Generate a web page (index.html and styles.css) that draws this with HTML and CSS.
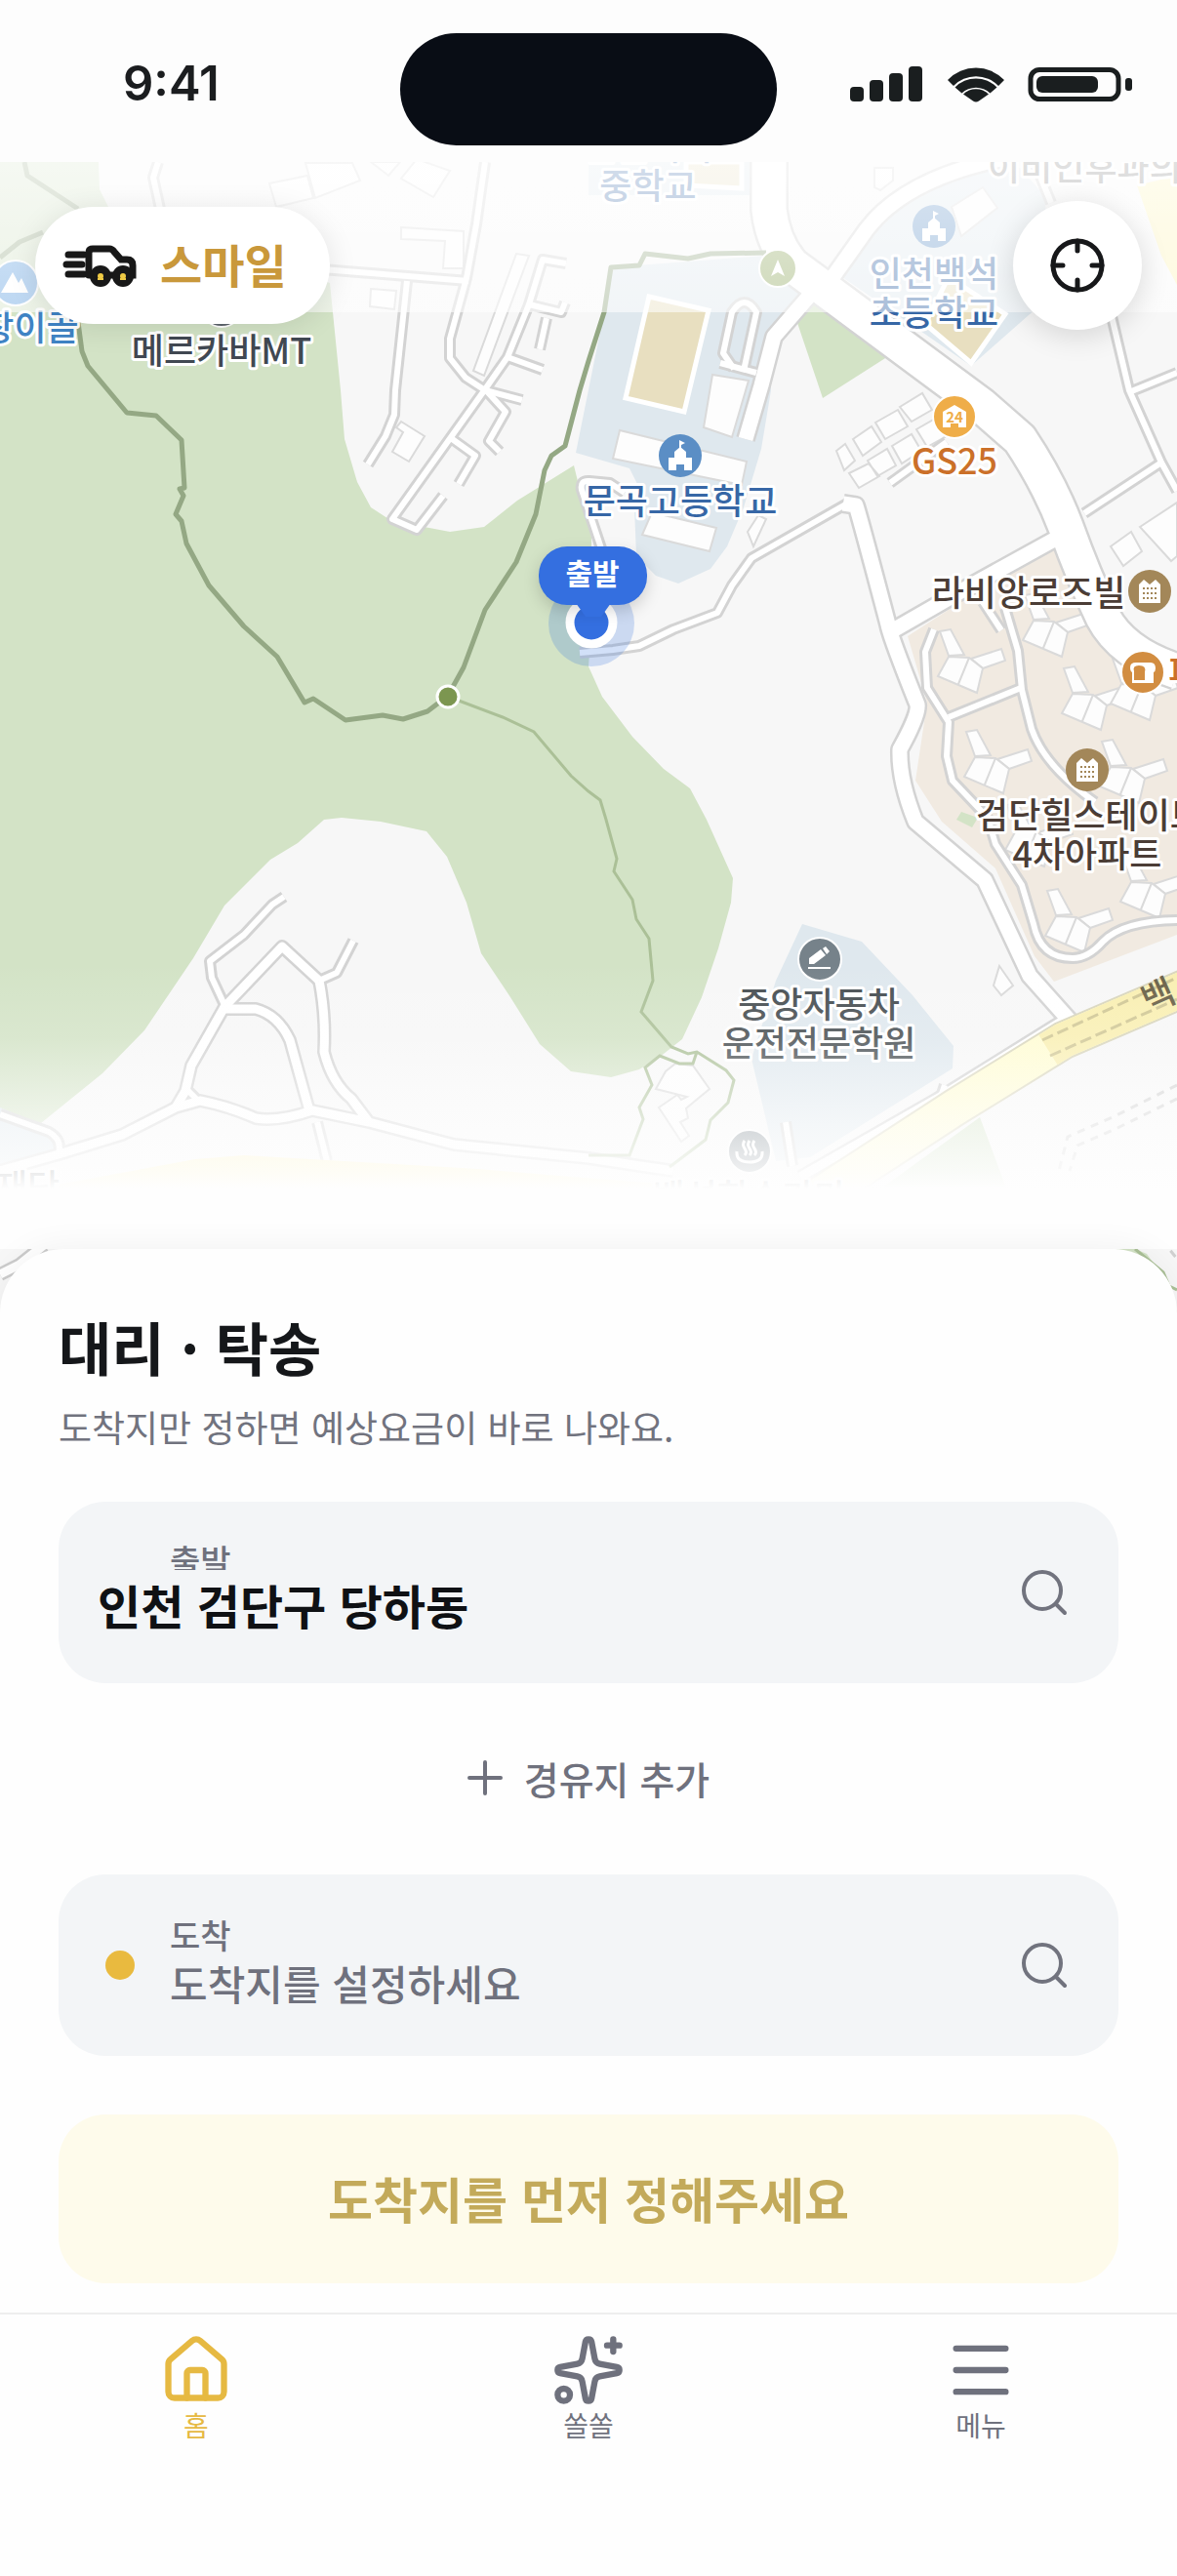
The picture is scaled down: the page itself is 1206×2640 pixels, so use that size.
FILE: index.html
```html
<!DOCTYPE html>
<html lang="ko">
<head>
  <meta charset="UTF-8">
  <meta name="viewport" content="width=device-width, initial-scale=1.0">
  <title>스마일</title>
  <link rel="stylesheet" href="styles.css">
</head>
<body>
  <header class="status-bar">
    <span class="time">9:41</span>
    <span class="island"></span>
    <svg class="status-icons" viewBox="0 0 292 40" aria-hidden="true">
      <rect x="1" y="23" width="14" height="15" rx="4"/>
      <rect x="21" y="16" width="14" height="22" rx="4"/>
      <rect x="41" y="9" width="14" height="29" rx="4"/>
      <rect x="61" y="2" width="14" height="36" rx="4"/>
      <path d="M101 16a40 40 0 0 1 58 0l-6 6a32 32 0 0 0-46 0z"/>
      <path d="M108.500 23.500a30 30 0 0 1 43 0l-7 6a21 21 0 0 0-29 0z"/>
      <path d="M117 30.500a19 19 0 0 1 26 0l-10 7q-3 2-6 0z"/>
      <rect class="battery" x="186" y="5.500" width="90" height="30" rx="9"/>
      <rect x="192" y="12" width="63" height="17" rx="6"/>
      <rect x="283" y="14" width="7" height="13" rx="3"/>
    </svg>
  </header>

  <main class="screen">
    <section class="map">
      <svg class="map-canvas" viewBox="0 166 1206 1180" role="img" aria-label="지도">
        <defs>
          <g id="lanes">
            <path d="M162 166L157 182L164 214"/>
            <path d="M497 166L488 230L478 285L461 347V367L477 387L497 400L535 410"/>
            <path d="M330 276L480 288"/>
            <path d="M417 288L405 400L404 425L395 447L377 476"/>
            <path d="M580 270L556 266L542 312L520 366L497 399L402 532L427 543L454 508"/>
            <path d="M542 312L575 320L579 310M560 326L553 358M520 366L556 379"/>
            <path d="M497 399L518 422L501 452L512 463M462 449L487 467L470 496"/>
            <path d="M752 378L741 362L750 320Q763 300 775 320L762 380"/>
            <path d="M738 372L775 382"/>
            <path d="M1060 166L1077 208M1138 320L1157 400L1190 474L1206 503M1157 402L1206 382"/>
            <path d="M1190 474L1111 526"/>
            <path d="M616 562L596 502Q594 492 604 493L625 495L640 505"/>
            <path d="M868 516L770 572L750 600L735 628L690 645L655 662L628 666L594 669"/>
            <path d="M291 919L279 927L250 958L215 985L217 1002L230 1030"/>
            <path d="M362 964L345 997L327 1005"/>
            <path d="M325 1150L335 1190"/>
            <path d="M190 1115L205 1130"/>
            <path d="M0 1142L50 1160Q64 1168 60 1182"/>
            <path d="M957 645L948 668L950 705L972 740L970 775L976 800L1012 838L1020 865L1047 907L1059 947Q1066 982 1099 982Q1115 982 1130 965Q1150 944 1206 943"/>
            <path d="M1030 623L1043 667L1047 707L1057 747Q1070 785 1122 822"/>
            <path d="M972 735L1046 705M1007 617L1026 646"/>
            <path d="M912 495L970 453"/>
            <path d="M805 1150L812 1195M968 1112L962 1130"/>
          </g>
          <g id="streets">
            <path d="M864 516L877 518Q881 530 910 640Q912 652 940 722Q942 732 922 768Q921 800 938 842L1009 902L1055 1000L1096 1046"/>
            <path d="M1100 542L995 600L915 646"/>
            <path d="M832 300L793 345L780 395L764 450"/>
            <path d="M849 290L888 235Q930 180 1040 160"/>
          </g>
          <g id="farm">
            <path d="M327 1005L289 970L230 1032L196 1092L190 1118L180 1135"/>
            <path d="M230 1034H262Q285 1040 297 1066L318 1142"/>
            <path d="M327 1005Q334 1040 332 1078Q340 1110 360 1126L378 1150"/>
            <path d="M0 1200L60 1183L125 1163L180 1135L205 1128Q235 1134 262 1146Q285 1150 320 1138L378 1150L465 1173L603 1187L690 1200"/>
            <path d="M1095 1042L960 1126L820 1206"/>
          </g>
          <g id="avenue">
            <path d="M788 160V215Q792 250 812 272L850 300L1005 415L1045 450Q1075 495 1092 540Q1110 590 1130 632Q1150 670 1206 688"/>
          </g>
          <g id="tower">
            <path d="M-30-27L-19-29L-5-3L-21-2Z"/>
            <path d="M2 1L33-9L37 3L14 11Z"/>
            <path d="M-21-1L0 0L14 11L8 36L-32 19ZM0 0L-11 27"/>
          </g>
          <g id="school">
            <circle r="22"/>
            <path class="glyph" d="M-12 15V2H-6V-4L0-9L6-4V2H12V15H4V9H-4V15ZM-1-8V-16L5-13L1-11V-8Z"/>
          </g>
          <g id="apartment">
            <circle r="22"/>
            <path class="glyph" d="M-11 12V-7L-6-12L0-7L6-12L11-7V12Z"/>
            <path class="windows" d="M-7-3H8M-7 2H8M-7 7H8"/>
          </g>
        </defs>

        <rect class="ground" y="166" width="1206" height="1180"/>

        <!-- parks and woods -->
        <path class="wood" d="M0 166H101L102 194L112 214L338 290L349 400L353 450L366 494L380 520L403 535L440 541L461 545L496 540L530 513L588 477L606 550L606 640L603 683L617 714L648 755L680 788L707 808L724 840L751 900L749 925L736 972L719 1022L699 1065L680 1080L655 1096L626 1104L585 1098L553 1070L523 1022L493 977L478 925L458 878L437 852L390 842L350 838L332 840L305 864L277 881L230 928L198 982L148 1056L105 1100L42 1151L0 1140Z"/>
        <path class="wood" d="M815 325L838 303L915 362L843 408ZM1004 1145L1032 1220H900Z"/>
        <path class="wood" d="M1140 1270L1175 1285L1200 1320L1206 1346H1170Z"/>

        <!-- school grounds and blocks -->
        <path class="campus" d="M626 274L785 262L822 300L785 345L790 400L780 460L762 520L745 560L728 583L695 598L672 590L652 570L650 520L655 500L645 480L590 464L619 320ZM860 282L900 225L965 180L1045 172L1070 200L1080 300L995 375L930 330ZM603 166H768V200H603Z"/>
        <path class="campus" d="M822 947L883 965L935 1020L977 1072L976 1095L830 1186L795 1190L770 1085L795 1005ZM0 1135L55 1158L62 1178L0 1196Z"/>
        <path class="estate" d="M1085 552L1095 556L1125 650L1160 692L1206 705V958L1080 1006L1060 980L1020 890L965 842L938 800L950 720L930 652Z"/>
        <path class="wood" d="M985 832L1002 838L996 848L980 840Z"/>
        <path class="field" d="M665 304L726 318L701 422L641 408ZM703 166H760V193L703 190ZM948 332L995 372L1030 322L972 284Z"/>
        <path class="house" d="M730 384L767 390L750 448L721 438ZM635 441L765 473L760 497L628 470ZM668 525L734 541L727 565L658 548ZM766 545L777 528L785 532L772 560Z"/>
        <path class="house" d="M975 212L1007 192L1022 213L985 242Z"/>

        <!-- loose buildings -->
        <path class="house" d="M276 188L315 180L321 203L283 212ZM313 167H361L369 185L323 203ZM427 163L461 175L444 202L411 183ZM380 166L398 180L410 166ZM411 233L475 237V275H454L456 247L411 245ZM380 296L406 298L404 317L379 314ZM529 260L542 262L496 385L485 380ZM411 432L435 447L419 473L402 463L413 443L406 438Z"/>
        <path class="house" d="M922 417L945 403L955 420L934 432ZM897 433L920 420L930 437L907 450ZM874 450L893 437L903 453L884 467ZM857 462L866 455L876 472L865 482ZM870 485L890 475L901 488L880 500ZM889 472L909 460L918 477L899 488ZM914 457L934 445L944 462L924 475ZM939 440L960 428L968 448L950 458Z"/>
        <path class="house" d="M1138 560L1159 545L1170 565L1151 580ZM1168 540L1206 515V570L1200 575ZM896 172H915V185L902 195L896 192ZM1024 990L1038 1010L1026 1020L1018 1010ZM672 1116L682 1098L692 1090L710 1092L727 1116L703 1136L705 1146L697 1150L706 1164L698 1170L675 1135L694 1122L698 1127L704 1124Z"/>
        <use href="#tower" class="house" x="1080" y="637"/>
        <use href="#tower" class="house" x="993" y="674"/>
        <use href="#tower" class="house" x="1120" y="712"/>
        <use href="#tower" class="house" x="1170" y="702"/>
        <use href="#tower" class="house" x="1020" y="777"/>
        <use href="#tower" class="house" x="1159" y="787"/>
        <use href="#tower" class="house" x="1062" y="852"/>
        <use href="#tower" class="house" x="1103" y="940"/>
        <use href="#tower" class="house" x="1180" y="905"/>

        <!-- roads: grey casing first, white on top -->
        <g class="casing">
          <use href="#lanes" stroke-width="12"/>
          <use href="#streets" stroke-width="20"/>
          <use href="#farm" stroke-width="14"/>
          <use href="#avenue" stroke-width="40"/>
        </g>
        <g class="surface">
          <use href="#lanes" stroke-width="6"/>
          <use href="#streets" stroke-width="15"/>
          <use href="#farm" stroke-width="9"/>
          <use href="#avenue" stroke-width="35"/>
        </g>
        <path class="highway-edge" d="M1230 1006L1090 1066L980 1134L840 1225"/>
        <path class="highway" d="M1230 1006L1090 1066L980 1134L840 1225"/>
        <path class="highway tint" d="M1230 1006L1090 1066L1074 1076"/>
        <path class="lane-mark" d="M1068 1066L1206 1002M1076 1082L1206 1024"/>
        <path class="highway-fill" d="M60 1214L200 1188L250 1184L490 1198L560 1204L700 1215V1240H60ZM1165 190L1206 180V292L1190 262Z"/>
        <path class="dashed" d="M1206 1112L1140 1145L1094 1165L1085 1200M1206 1126L1145 1156L1104 1174L1096 1200M1190 1270L1206 1290"/>
        <path class="casing-line" d="M0 1306L20 1296L45 1276"/>
        <path class="surface-line" d="M0 1306L20 1296L45 1276"/>

        <!-- walking trails -->
        <path class="trail" d="M25 166L28 180L80 214M0 264L20 248L44 238M80 330L84 360L90 375L130 423L160 426L186 451L189 500L184 501L188 508L180 527L186 534L191 557L214 600L250 642L284 673L312 720L321 716L354 738L392 733L413 737L438 729L459 713L475 684L497 625L529 576L549 527L558 482L565 467L579 457L594 400L603 370L619 320L626 274L655 272L661 260L705 265L728 260L785 259"/>
        <path class="footpath" d="M470 718L515 735L547 750L585 795L603 811L615 820L621 840L632 880L629 893L648 922L652 942L665 962L669 1005L657 1037L688 1073L705 1080L714 1078L744 1097L752 1107L746 1130L728 1148L723 1168L686 1196M714 1078L710 1090H696L676 1082L661 1094L668 1112L655 1135L659 1147L645 1184L603 1184M1163 1280L1192 1304L1198 1318L1206 1322"/>
        <circle class="trail-dot" cx="459" cy="714" r="11"/>

        <!-- places -->
        <g class="poi">
          <g transform="translate(16 290)" fill="#5f9fe0"><circle r="23"/><path class="glyph" d="M-15 10L-3-11L3 0L6-5L13 10Z"/></g>
          <g transform="translate(227 314)" fill="#5d646c"><circle r="21"/></g>
          <use href="#school" x="957" y="232" fill="#5b8ec5"/>
          <use href="#school" x="697" y="467" fill="#5b8ec5"/>
          <g transform="translate(797 275)" fill="#8da65c"><circle r="19"/><path class="glyph" d="M0-9L7 8L0 4L-7 8Z"/></g>
          <g transform="translate(978 427)" fill="#efad48"><circle r="22"/><path class="glyph" d="M-12 11V-5L0-12L12-5V11H4V7H-4V11Z"/></g>
          <use href="#apartment" x="1178" y="606" fill="#a38759"/>
          <use href="#apartment" x="1114" y="789" fill="#a38759"/>
          <g transform="translate(1171 689)" fill="#d28d41"><circle r="22"/><path class="glyph" d="M-13-5Q-13-10-7-10H8Q13-10 13-4Q13-1 11 0V11H-11V0Q-13-1-13-5Z"/><path d="M-9 8V-1Q-11-7-4-7Q4-7 2 0V8Z"/></g>
          <g transform="translate(840 983)" fill="#76828a"><circle r="22"/><path class="glyph" d="M-12 8V10H11V8ZM-11 5V-1L1-10L6-4L-6 5ZM3-11L6-13L10-8L7-5Z"/></g>
          <g transform="translate(768 1180)" fill="#76828a"><circle r="22"/><path class="steam" d="M-13 0Q-14 11 0 11Q14 11 13 0M-5-11Q-8-7-5-3T-5 4M0-11Q-3-7 0-3T0 4M5-11Q2-7 5-3T5 4"/></g>
        </g>

        <g class="place-names">
          <text class="badge-text" x="978" y="433">24</text>
          <text class="blue" x="664" y="164">인천백석</text>
          <text class="blue" x="664" y="204">중학교</text>
          <text class="blue" x="957" y="294">인천백석</text>
          <text class="blue" x="957" y="334">초등학교</text>
          <text class="blue" x="697" y="527">문곡고등학교</text>
          <text class="sky" x="31" y="349">창이골</text>
          <text x="227" y="373">메르카바MT</text>
          <text class="grey" x="1128" y="185">이비인후과의원</text>
          <text class="orange" x="978" y="486">GS25</text>
          <text class="brown" x="1054" y="621">라비앙로즈빌</text>
          <text class="orange" x="1280" y="702">파리바게뜨</text>
          <text class="brown" x="1116" y="849">검단힐스테이트</text>
          <text class="brown" x="1114" y="889">4차아파트</text>
          <text class="slate" x="839" y="1043">중앙자동차</text>
          <text class="slate" x="839" y="1083">운전전문학원</text>
          <text class="slate" x="768" y="1240">백석한수가마</text>
          <text class="slate" x="28" y="1230">재단</text>
          <text class="road-name" x="1192" y="1032" transform="rotate(-24 1192 1032)">백</text>
        </g>
      </svg>
      <div class="veil-top"></div>
      <div class="veil-bottom"></div>

      <svg class="map-canvas pin" viewBox="0 166 1206 1180" aria-hidden="true">
        <circle class="pin-halo" cx="606" cy="639" r="44"/>
        <circle class="pin-dot" cx="606" cy="638" r="22"/>
        <rect class="pin-label" x="552" y="560" width="111" height="60" rx="29"/>
        <path class="pin-tail" d="M590 618H626L616 632H600Z"/>
        <text class="pin-text" x="607" y="599">출발</text>
      </svg>

      <div class="map-controls">
        <a class="brand" href="#">
          <svg class="brand-icon" viewBox="0 0 76 44" aria-hidden="true">
            <path class="speed" d="M6 11H22M4 21H20M6 31H22"/>
            <path class="car" d="M27 31V9Q27 5 31 5H48Q51 5 53 8L60 16H66Q72 16 72 22V32H27"/>
            <circle cx="39" cy="33" r="11"/>
            <circle cx="62" cy="33" r="11"/>
            <path class="hub" d="M36 35H42V37H36ZM59 35H65V37H59Z"/>
            <circle class="hub" cx="39" cy="33" r="3"/>
            <circle class="hub" cx="62" cy="33" r="3"/>
          </svg>
          <span>스마일</span>
        </a>
        <button class="locate" type="button" aria-label="현재 위치">
          <svg viewBox="0 0 60 60" aria-hidden="true">
            <circle cx="30" cy="30" r="25"/>
            <path d="M30 5V15M30 45V55M5 30H15M45 30H55"/>
          </svg>
        </button>
      </div>
    </section>

    <section class="sheet">
      <h1>대리 · 탁송</h1>
      <p class="lead">도착지만 정하면 예상요금이 바로 나와요.</p>

      <button class="place start" type="button">
        <span class="place-text">
          <span class="place-label">출발</span>
          <strong class="place-value">인천 검단구 당하동</strong>
        </span>
        <svg class="search" viewBox="0 0 50 50" aria-hidden="true"><circle cx="22" cy="23" r="19"/><path d="M36 37L45 46"/></svg>
      </button>

      <button class="add-stop" type="button">
        <svg viewBox="0 0 36 36" aria-hidden="true"><path d="M18 2V34M2 18H34"/></svg>
        경유지 추가
      </button>

      <button class="place goal" type="button">
        <span class="dot"></span>
        <span class="place-text">
          <span class="place-label">도착</span>
          <span class="place-value">도착지를 설정하세요</span>
        </span>
        <svg class="search" viewBox="0 0 50 50" aria-hidden="true"><circle cx="22" cy="23" r="19"/><path d="M36 37L45 46"/></svg>
      </button>

      <button class="submit" type="button" disabled>도착지를 먼저 정해주세요</button>
    </section>
  </main>

  <nav class="tab-bar">
    <a class="tab active" href="#">
      <svg viewBox="0 0 24 24" aria-hidden="true">
        <path d="M15 21v-8a1 1 0 0 0-1-1h-4a1 1 0 0 0-1 1v8"/>
        <path d="M3 10a2 2 0 0 1 .709-1.528l7-6a2 2 0 0 1 2.582 0l7 6A2 2 0 0 1 21 10v9a2 2 0 0 1-2 2H5a2 2 0 0 1-2-2z"/>
      </svg>
      홈
    </a>
    <a class="tab" href="#">
      <svg viewBox="0 0 24 24" aria-hidden="true">
        <path d="M11.017 2.814a1 1 0 0 1 1.966 0l1.051 5.558a2 2 0 0 0 1.594 1.594l5.558 1.051a1 1 0 0 1 0 1.966l-5.558 1.051a2 2 0 0 0-1.594 1.594l-1.051 5.558a1 1 0 0 1-1.966 0l-1.051-5.558a2 2 0 0 0-1.594-1.594l-5.558-1.051a1 1 0 0 1 0-1.966l5.558-1.051a2 2 0 0 0 1.594-1.594z"/>
        <path d="M20 2v4M22 4h-4"/>
        <circle cx="4" cy="20" r="2"/>
      </svg>
      쏠쏠
    </a>
    <a class="tab" href="#">
      <svg viewBox="0 0 24 24" aria-hidden="true">
        <path d="M4 5h16M4 12h16M4 19h16"/>
      </svg>
      메뉴
    </a>
  </nav>
</body>
</html>
```
FILE: styles.css
```css
* {
  box-sizing: border-box;
}
body {
  display: flex;
  flex-direction: column;
  min-height: 100vh;
  margin: 0;
  background: #fefefe;
  color: #15171a;
  font-family: "Noto Sans CJK KR", sans-serif;
}
button {
  border: none;
  font-family: inherit;
  cursor: pointer;
}
a {
  color: inherit;
  text-decoration: none;
}

/* status bar */
.status-bar {
  display: grid;
  grid-template-columns: 1fr 386px 1fr;
  align-items: center;
  height: 166px;
  padding-top: 16px;
  background: #fdfdfd;
}
.time {
  margin: -10px 0 0 126px;
  font-family: Inter, sans-serif;
  font-size: 49px;
  font-weight: 600;
  line-height: 60px;
  color: #1b1d1f;
}
.island {
  height: 115px;
  border-radius: 58px;
  background: #090d15;
}
.status-icons {
  justify-self: end;
  width: 292px;
  margin: -10px 44px 0 0;
  fill: #1a1e1f;
}
.battery {
  fill: none;
  stroke: #1a1e1f;
  stroke-width: 5;
}

/* map */
.map {
  position: relative;
}
.map-canvas {
  display: block;
  width: 100%;
}
.pin {
  position: absolute;
  inset: 0;
}
.ground { fill: #f7f7f7; }
.wood { fill: #d3e3c6; }
.campus { fill: #dfe8ee; }
.estate { fill: #f1eae1; }
.field {
  fill: #e8dfc0;
  stroke: #fff;
  stroke-width: 5;
}
.house {
  fill: #fdfdfd;
  stroke: #dadada;
  stroke-width: 2;
}
.casing, .surface {
  fill: none;
  stroke-linejoin: round;
}
.casing { stroke: #d3d3d3; }
.surface { stroke: #fff; }
.casing-line, .surface-line, .highway, .highway-edge, .lane-mark, .dashed, .trail, .footpath, .steam {
  fill: none;
}
.casing-line {
  stroke: #ccc;
  stroke-width: 14;
}
.surface-line {
  stroke: #fff;
  stroke-width: 9;
}
.highway-edge {
  stroke: #d9d6bd;
  stroke-width: 40;
}
.highway {
  stroke: #fffcd2;
  stroke-width: 36;
}
.highway.tint { stroke: #f9efb2; }
.highway-fill { fill: #fdf3b4; }
.lane-mark {
  stroke: #d0c795;
  stroke-width: 3;
  stroke-dasharray: 12 5;
}
.dashed {
  stroke: #d0d0d0;
  stroke-width: 3;
  stroke-dasharray: 8 7;
}
.trail {
  stroke: #94a884;
  stroke-width: 5;
  stroke-linejoin: round;
}
.footpath {
  stroke: #abc097;
  stroke-width: 3;
}
.trail-dot {
  fill: #7c9650;
  stroke: #fff;
  stroke-width: 3;
}
.poi circle {
  stroke: #fff;
  stroke-width: 2;
}
.glyph { fill: #fff; }
.windows {
  stroke: #a38759;
  stroke-width: 2;
  stroke-dasharray: 2 2;
}
.steam {
  stroke: #fff;
  stroke-width: 3;
}
.place-names text {
  fill: #414852;
  stroke: #fff;
  stroke-width: 6;
  stroke-linejoin: round;
  paint-order: stroke;
  font-size: 36px;
  font-weight: 500;
  text-anchor: middle;
}
.place-names .blue { fill: #3767a6; }
.place-names .sky { fill: #3f83c4; }
.place-names .grey { fill: #777; }
.place-names .orange { fill: #cb7029; }
.place-names .brown { fill: #4b3d36; }
.place-names .slate { fill: #474e52; }
.place-names .road-name {
  fill: #6a6148;
  stroke: none;
}
.place-names .badge-text {
  fill: #efad48;
  stroke: none;
  font-size: 15px;
  font-weight: 700;
}
.veil-top {
  position: absolute;
  inset: 0 0 auto;
  height: 154px;
  background: linear-gradient(rgba(255, 255, 255, .78), rgba(255, 255, 255, .58));
}
.veil-bottom {
  position: absolute;
  inset: auto 0 66px;
  height: 292px;
  background: linear-gradient(rgba(254, 254, 254, 0), rgba(254, 254, 254, .16) 26%, rgba(254, 254, 254, .4) 40%, rgba(254, 254, 254, .68) 56%, rgba(254, 254, 254, .88) 72%, #fefefe 79%);
}
.pin-halo { fill: rgba(52, 112, 224, .22); }
.pin-dot {
  fill: #346fe0;
  stroke: #fff;
  stroke-width: 9;
}
.pin-label {
  fill: #346fe0;
  filter: drop-shadow(0 6px 8px rgba(0, 0, 0, .16));
}
.pin-tail { fill: #346fe0; }
.pin-text {
  fill: #fff;
  font-size: 30px;
  font-weight: 700;
  text-anchor: middle;
}
.map-controls {
  position: absolute;
  inset: 40px 36px auto;
  display: flex;
  align-items: center;
  justify-content: space-between;
}
.brand {
  display: flex;
  align-items: center;
  gap: 24px;
  height: 120px;
  padding: 0 44px 0 28px;
  border-radius: 60px;
  background: #fff;
  box-shadow: 0 4px 30px rgba(0, 0, 0, .1);
  color: #c9983b;
  font-size: 47px;
  font-weight: 700;
  line-height: 60px;
}
.brand span {
  padding-bottom: 4px;
}
.brand-icon {
  width: 76px;
  fill: #181818;
}
.speed, .car {
  fill: none;
  stroke: #181818;
  stroke-width: 7;
  stroke-linecap: round;
}
.hub { fill: #f0cb45; }
.locate {
  display: grid;
  place-items: center;
  width: 132px;
  height: 132px;
  padding: 0;
  border-radius: 50%;
  background: #fff;
  box-shadow: 0 6px 30px rgba(0, 0, 0, .14);
}
.locate svg {
  width: 60px;
  fill: none;
  stroke: #17181a;
  stroke-width: 5;
  stroke-linecap: round;
}

/* booking sheet */
.sheet {
  position: relative;
  display: flex;
  flex-direction: column;
  margin-top: -66px;
  padding: 64px 60px 30px;
  border-radius: 66px 66px 0 0;
  background: #fefefe;
  box-shadow: 0 0 36px rgba(0, 0, 0, .06);
}
h1 {
  margin: 0;
  font-size: 59px;
  font-weight: 700;
  line-height: 72px;
}
.lead {
  margin: 22px 0 53px;
  color: #71737e;
  font-size: 37px;
  line-height: 48px;
}
.place {
  display: flex;
  align-items: center;
  height: 186px;
  padding: 0 50px 0 40px;
  border-radius: 48px;
  background: #f3f5f7;
  color: #6f717d;
  text-align: left;
}
.place-text {
  display: flex;
  flex: 1;
  flex-direction: column;
  padding-bottom: 8px;
}
.place-label {
  font-size: 34px;
  font-weight: 500;
  line-height: 44px;
}
.place-value {
  font-size: 42px;
  font-weight: 500;
  line-height: 54px;
}
.start .place-label {
  padding-left: 74px;
}
.start .place-value {
  z-index: 1;
  margin-top: -12px;
  background: #f3f5f7;
  color: #0f1114;
  font-size: 48px;
  font-weight: 700;
  line-height: 70px;
}
.goal {
  gap: 36px;
  padding-left: 48px;
}
.dot {
  width: 30px;
  height: 30px;
  border-radius: 50%;
  background: #e9ba3f;
}
.search {
  width: 50px;
  fill: none;
  stroke: #71737e;
  stroke-width: 4;
  stroke-linecap: round;
}
.add-stop {
  display: flex;
  align-items: center;
  justify-content: center;
  gap: 22px;
  height: 196px;
  padding-bottom: 4px;
  background: none;
  color: #6f717d;
  font-size: 39px;
  font-weight: 500;
}
.add-stop svg {
  width: 36px;
  stroke: #6f717d;
  stroke-width: 4;
  stroke-linecap: round;
}
.submit {
  height: 173px;
  margin-top: 60px;
  padding-bottom: 4px;
  border-radius: 48px;
  background: #fefbeb;
  color: #c3aa5a;
  font-size: 50px;
  font-weight: 700;
}

/* bottom tabs */
.tab-bar {
  position: relative;
  display: flex;
  flex: 1;
  border-top: 2px solid #eee;
  background: #fefefe;
}
.tab {
  display: flex;
  flex: 1;
  flex-direction: column;
  align-items: center;
  padding: 19px 0 60px;
  color: #6f717d;
  font-size: 28px;
  line-height: 36px;
}
.tab svg {
  width: 76px;
  height: 76px;
  fill: none;
  stroke: currentColor;
  stroke-width: 2;
  stroke-linecap: round;
  stroke-linejoin: round;
}
.tab.active {
  color: #e6b942;
}
```
